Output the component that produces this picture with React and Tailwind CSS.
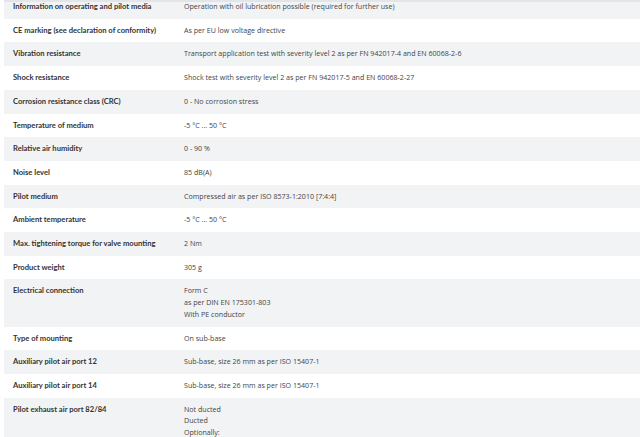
const rows = [
  ['Information on operating and pilot media', ['Operation with oil lubrication possible (required for further use)']],
  ['CE marking (see declaration of conformity)', ['As per EU low voltage directive']],
  ['Vibration resistance', ['Transport application test with severity level 2 as per FN 942017-4 and EN 60068-2-6']],
  ['Shock resistance', ['Shock test with severity level 2 as per FN 942017-5 and EN 60068-2-27']],
  ['Corrosion resistance class (CRC)', ['0 - No corrosion stress']],
  ['Temperature of medium', ['-5 °C ... 50 °C']],
  ['Relative air humidity', ['0 - 90 %']],
  ['Noise level', ['85 dB(A)']],
  ['Pilot medium', ['Compressed air as per ISO 8573-1:2010 [7:4:4]']],
  ['Ambient temperature', ['-5 °C ... 50 °C']],
  ['Max. tightening torque for valve mounting', ['2 Nm']],
  ['Product weight', ['305 g']],
  ['Electrical connection', ['Form C', 'as per DIN EN 175301-803', 'With PE conductor']],
  ['Type of mounting', ['On sub-base']],
  ['Auxiliary pilot air port 12', ['Sub-base, size 26 mm as per ISO 15407-1']],
  ['Auxiliary pilot air port 14', ['Sub-base, size 26 mm as per ISO 15407-1']],
  ['Pilot exhaust air port 82/84', ['Not ducted', 'Ducted', 'Optionally:']],
];

export default function App() {
  return (
    <div className="h-[437px] w-[640px] overflow-hidden bg-white pl-1">
      <div className="relative -mt-[5px]">
        <div className="absolute left-0 right-0 top-[5px] h-[2px] bg-[#e3e5e8]" />
        {rows.map(([label, values], i) => (
          <div
            key={label}
            className={`flex py-[6px] leading-[11.7px] ${i % 2 === 0 ? 'bg-[#f2f3f5]' : 'bg-white'}`}
          >
            <div
              className="w-[180px] shrink-0 pl-[9px] text-[7.6px] font-bold text-[#333]"
              style={{ fontFamily: 'Lato, "Open Sans", sans-serif' }}
            >
              {label}
            </div>
            <div
              className="text-[7.1px] text-[#444]"
              style={{ fontFamily: '"Open Sans", "Noto Sans", sans-serif' }}
            >
              {values.map((v) => (
                <div key={v}>{v}</div>
              ))}
            </div>
          </div>
        ))}
      </div>
    </div>
  );
}
